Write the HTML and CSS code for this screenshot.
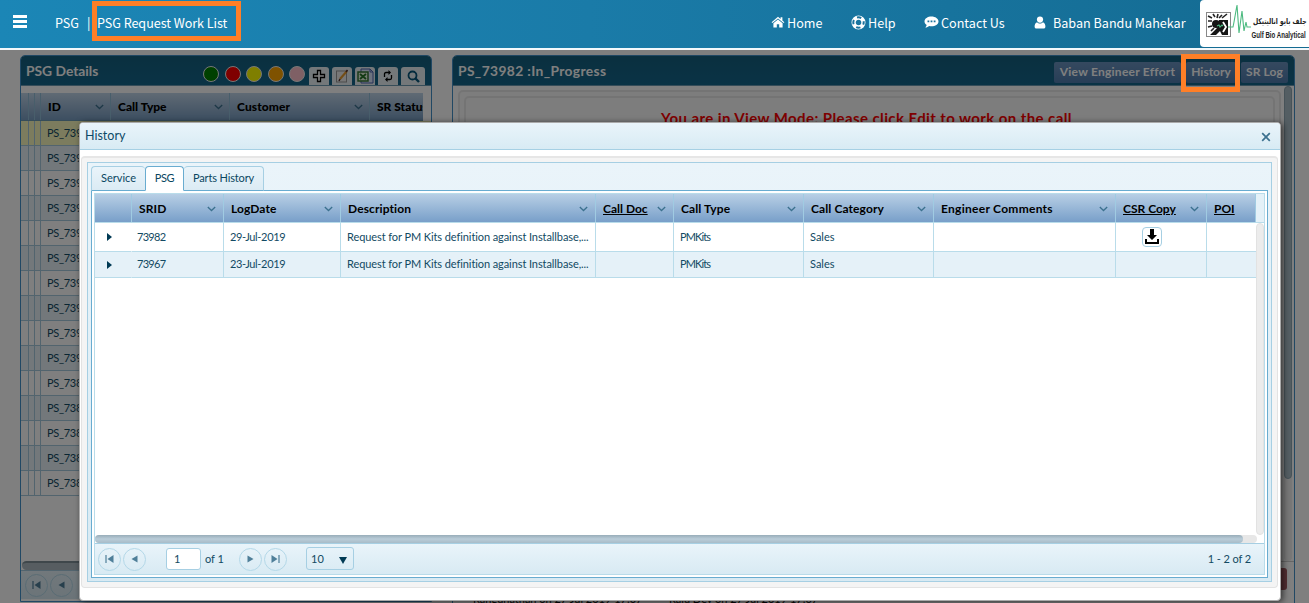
FILE: index.html
```html
<!DOCTYPE html>
<html lang="en">
<head>
<meta charset="utf-8">
<title>PSG Request Work List</title>
<link rel="stylesheet" href="styles.css">
</head>
<body>
<svg class="defs" aria-hidden="true">
  <symbol id="chev" viewBox="0 0 9 6"><path d="M.8 1 4.5 4.5 8.2 1" fill="none" stroke="#3c718f" stroke-width="1.3"/></symbol>
  <symbol id="first" viewBox="0 0 9 8"><path d="M1 0v8" stroke="#4f7f99" stroke-width="1.2"/><path d="M8.5 0v8L2.5 4z" fill="#4f7f99"/></symbol>
  <symbol id="prev" viewBox="0 0 9 8"><path d="M7.5 .5v7L1.5 4z" fill="#4f7f99"/></symbol>
</svg>
<header class="topbar">
  <span class="burger"><i></i><i></i><i></i></span>
  <span class="crumb">PSG</span><span class="bar">|</span><span class="page">PSG Request Work List</span>
  <nav class="nav">
    <a class="home"><svg width="14" height="12" viewBox="0 0 14 12"><path d="M7 .8.6 6.2l.8.9L7 2.4l5.6 4.7.8-.9-2-1.7V1.3H9.6v1.600z" fill="#fff"/><path d="M2.400 7.200 7 3.400l4.600 3.800V11.500H8.200V8.200H5.800v3.300H2.400z" fill="#fff"/></svg>Home</a>
    <a class="help"><svg width="15" height="15" viewBox="0 0 15 15"><circle cx="7.500" cy="7.500" r="4.900" fill="none" stroke="#fff" stroke-width="4.200"/><circle cx="7.500" cy="7.500" r="5.200" fill="none" stroke="#1b739d" stroke-width="2" stroke-dasharray="4.400 3.768" stroke-dashoffset="2.200"/></svg>Help</a>
    <a class="contact"><svg width="15" height="12" viewBox="0 0 15 12"><path d="M7.500.500C3.700.500.500 2.600.500 5.400c0 1.500.900 2.700 2.200 3.600-.2 1-.7 1.700-1.400 2.500 1.700-.2 2.900-.8 3.900-1.600.7.200 1.500.300 2.300.300 3.800 0 7-2.100 7-4.800S11.300.500 7.500.500z" fill="#fff"/><path d="M3.500 4.600h1.800v1.700H3.500zM6.600 4.600h1.800v1.700H6.600zM9.700 4.600h1.800v1.700H9.700z" fill="#1b739d"/></svg>Contact Us</a>
    <a class="user"><svg width="12" height="13" viewBox="0 0 12 13"><circle cx="6" cy="3.600" r="3.100" fill="#fff"/><path d="M3 6.200C1.200 6.800.600 8.700.600 10.600.600 12 1.300 12.600 2.500 12.600h7c1.200 0 1.900-.6 1.900-2 0-1.900-.6-3.800-2.400-4.400C7.500 8 4.500 8 3 6.200z" fill="#fff"/></svg>Baban Bandu Mahekar</a>
  </nav>
  <div class="logo">
    <svg width="52" height="42" viewBox="0 0 52 42">
      <rect x="6.500" y="12.500" width="24" height="24" fill="#fff" stroke="#888"/>
      <path d="M19 20h9v15h-6l-2-4-4 4h-6l7-7z" fill="#151515"/><circle cx="16" cy="24" r="4" fill="#151515"/>
      <path d="m8 16 4 2M13 14l2 3M18 14l-1 4M22 15l-3 3M27 14l-5 4M8 21h4M8 27l4-1M11 31l3-3" stroke="#222" stroke-width="1.600"/>
      <path d="m23 22 3 5-3 5" fill="none" stroke="#fff" stroke-width="1.800"/>
      <path d="M17 26l2-1 1 2 2-2 1 1M28 27h5l1-5 3-17 2 28 3-22 2 20 2-9 1 5h4" fill="none" stroke="#4dba80" stroke-width="1.100"/>
    </svg>
    <div class="logo-text"><span class="ar" dir="rtl">جلف بايو اناليتيكل</span><span class="en">Gulf Bio Analytical</span></div>
  </div>
</header>

<main class="work">
  <section class="panel list">
    <div class="panel-head">
      <h2 class="title">PSG Details</h2>
      <div class="dots"><i class="dot green"></i><i class="dot red"></i><i class="dot yellow"></i><i class="dot orange"></i><i class="dot pink"></i></div>
      <div class="tools">
        <span class="tool"><svg width="14" height="14" viewBox="0 0 14 14"><path d="M5.500 1.500h3v4h4v3h-4v4h-3v-4h-4v-3h4z" fill="#fff" stroke="#000" stroke-width="1.300"/></svg></span>
        <span class="tool"><svg width="14" height="14" viewBox="0 0 14 14"><rect x="1.500" y="2" width="10" height="11" fill="#eee" stroke="#999"/><path d="M12 2 5 10" stroke="#e59b2e" stroke-width="2"/><path d="M12.500 1 11 3M5 10l-1 2" stroke="#533" stroke-width="1.500"/></svg></span>
        <span class="tool"><svg width="17" height="16" viewBox="0 0 17 16"><path d="M4 1h9l3 3v11H4z" fill="#dce6ff" stroke="#5266b0"/><path d="M13 1v3h3" fill="none" stroke="#5266b0"/><rect x="1" y="4" width="10" height="9" fill="#e7f5de" stroke="#367735" stroke-width="1.500"/><path d="m3 6 6 5M9 6l-6 5" stroke="#267528" stroke-width="1.800"/></svg></span>
        <span class="tool"><svg width="10" height="12" viewBox="0 0 10 12"><path d="M1.500 7V4c0-1 .5-1.500 1.500-1.500h3M8.500 5v3c0 1-.5 1.500-1.500 1.500H4" fill="none" stroke="#000" stroke-width="1.300"/><path d="M5.500 0 8 2.500 5.500 5zM4.500 7 2 9.500 4.500 12z"/></svg></span>
        <span class="tool search"><svg width="13" height="13" viewBox="0 0 13 13"><circle cx="5.500" cy="5.500" r="4" fill="none" stroke="#08567a" stroke-width="1.800"/><path d="m8.500 8.500 3.500 3.500" stroke="#08567a" stroke-width="2.400"/></svg></span>
      </div>
    </div>
    <div class="list-head"><span class="c0"></span><span class="c0"></span><span class="c0"></span><b class="h-id">ID<svg class="chev"><use href="#chev"/></svg></b><b class="h-type">Call Type<svg class="chev"><use href="#chev"/></svg></b><b class="h-cust">Customer<svg class="chev"><use href="#chev"/></svg></b><b class="h-stat">SR Status</b></div>
    <div class="list-rows" id="rows">
      <div class="lr sel"><i></i><i></i><i></i><span>PS_73982</span></div>
      <div class="lr"><i></i><i></i><i></i><span>PS_73981</span></div>
      <div class="lr"><i></i><i></i><i></i><span>PS_73980</span></div>
      <div class="lr"><i></i><i></i><i></i><span>PS_73979</span></div>
      <div class="lr"><i></i><i></i><i></i><span>PS_73978</span></div>
      <div class="lr"><i></i><i></i><i></i><span>PS_73977</span></div>
      <div class="lr"><i></i><i></i><i></i><span>PS_73976</span></div>
      <div class="lr"><i></i><i></i><i></i><span>PS_73975</span></div>
      <div class="lr"><i></i><i></i><i></i><span>PS_73974</span></div>
      <div class="lr"><i></i><i></i><i></i><span>PS_73973</span></div>
      <div class="lr"><i></i><i></i><i></i><span>PS_73899</span></div>
      <div class="lr"><i></i><i></i><i></i><span>PS_73898</span></div>
      <div class="lr"><i></i><i></i><i></i><span>PS_73897</span></div>
      <div class="lr"><i></i><i></i><i></i><span>PS_73896</span></div>
      <div class="lr"><i></i><i></i><i></i><span>PS_73895</span></div>
    </div>
    <div class="list-scroll"></div>
    <div class="list-pager"><span class="round"><svg width="9" height="8"><use href="#first"/></svg></span><span class="round"><svg width="9" height="8"><use href="#prev"/></svg></span></div>
  </section>

  <section class="panel detail">
    <div class="panel-head">
      <h2 class="title ps">PS_73982 :In_Progress</h2>
      <div class="actions"><button class="btn effort">View Engineer Effort</button><button class="btn hist">History</button><button class="btn log">SR Log</button></div>
    </div>
    <div class="detail-body">
      <div class="frame"><div class="inner"><p class="warn">You are in View Mode: Please click Edit to work on the call</p></div></div>
      <div class="vtrack"><div class="vthumb"></div></div>
    </div>
    <div class="detail-foot">
      <div class="stamps"><span class="stamp s1">Rangunathan on 27 Jul 2019 17:07</span><span class="stamp s2">Raju Dev on 27 Jul 2019 17:07</span></div>
      <span class="redbtn"></span>
    </div>
  </section>
</main>
<div class="shade"></div>

<section class="modal">
  <div class="modal-head"><span class="mt">History</span><svg width="10" height="10" viewBox="0 0 10 10"><path d="m1.200 1.200 7.600 7.600M8.800 1.200 1.200 8.800" stroke="#3c718f" stroke-width="1.700"/></svg></div>
  <div class="modal-body">
    <div class="tabs">
      <div class="tablist"><span class="tab t1">Service</span><span class="tab on">PSG</span><span class="tab t3">Parts History</span></div>
      <div class="tabpane">
        <div class="grid">
          <div class="gh row"><b></b><b>SRID<svg class="chev"><use href="#chev"/></svg></b><b>LogDate<svg class="chev"><use href="#chev"/></svg></b><b>Description<svg class="chev"><use href="#chev"/></svg></b><b><u>Call Doc</u><svg class="chev"><use href="#chev"/></svg></b><b>Call Type<svg class="chev"><use href="#chev"/></svg></b><b>Call Category<svg class="chev"><use href="#chev"/></svg></b><b class="wide">Engineer Comments<svg class="chev"><use href="#chev"/></svg></b><b><u>CSR Copy</u><svg class="chev"><use href="#chev"/></svg></b><b><u>POI</u></b></div>
          <div class="gbody">
            <div class="gmain">
              <div class="row r1"><span class="arrow"><svg width="5" height="8"><path d="M0 0 5 4 0 8z" fill="#003a54"/></svg></span><span class="srid">73982</span><span class="date">29-Jul-2019</span><span class="desc">Request for PM Kits definition against Installbase,...</span><span></span><span class="pmk">PMKits</span><span>Sales</span><span></span><span class="dlcell"><i class="dl"><svg width="14" height="15" viewBox="0 0 14 15"><path d="M5 0h4v6h3l-5 5-5-5h3z"/><path d="M1 10v4h12v-4" fill="none" stroke="#000" stroke-width="2"/></svg></i></span><span></span></div>
              <div class="row r2"><span class="arrow"><svg width="5" height="8"><path d="M0 0 5 4 0 8z" fill="#003a54"/></svg></span><span class="srid">73967</span><span class="date">23-Jul-2019</span><span class="desc">Request for PM Kits definition against Installbase,...</span><span></span><span class="pmk">PMKits</span><span>Sales</span><span></span><span></span><span></span></div>
            </div>
            <div class="gv"></div>
          </div>
          <div class="gs"><div class="gthumb"></div></div>
          <div class="pager">
            <span class="round"><svg width="9" height="8"><use href="#first"/></svg></span><span class="round"><svg width="9" height="8"><use href="#prev"/></svg></span>
            <span class="num">1</span><span class="of">of 1</span>
            <span class="round flip"><svg width="9" height="8"><use href="#prev"/></svg></span><span class="round flip"><svg width="9" height="8"><use href="#first"/></svg></span>
            <span class="size">10<svg width="8" height="7"><path d="M0 0h8L4 7z" fill="#003a54"/></svg></span>
            <span class="count">1 - 2 of 2</span>
          </div>
        </div>
      </div>
    </div>
  </div>
</section>
<div class="mark mark-title"></div>
<div class="mark mark-history"></div>
</body>
</html>
```
FILE: styles.css
```css
*{box-sizing:border-box}
body{margin:0;width:1309px;height:603px;overflow:hidden;position:relative;background:#fff;font:11px Lato,"Open Sans",sans-serif;color:#124a63}
svg{display:block;flex:none}
.defs{position:absolute;width:0;height:0}

/* top bar */
.topbar{height:50px;border-bottom:2px solid #f3f8fb;background:linear-gradient(90deg,#1b86b6,#1a7ba8 45%,#146b92);display:flex;align-items:center;color:#fff;font:12.600px "Noto Sans CJK SC","Noto Sans CJK JP",sans-serif;white-space:nowrap;padding-left:13px}
.topbar>*{flex:none}
.burger{width:14px;display:grid;gap:2px;margin:-5px 28px 0 0}
.burger i{height:3px;background:#fff}
.crumb{width:32px}
.bar{width:10px}
.page{width:130px;letter-spacing:-.05px}
.topbar>span:not(.burger){padding-bottom:3px}
.nav{width:973px;height:100%;display:flex;align-items:center;padding:0 0 4px 544px}
.nav a{display:flex;align-items:center;flex:none}
.nav svg{margin-right:2px}
.home{width:80px}
.help{width:73px}
.contact{width:110px}
.nav .user svg{margin-right:7px}
.logo{width:109px;height:47px;background:#fff;border-radius:4px 0 0 4px;display:flex;align-self:flex-start}
.logo-text{width:54px;display:flex;flex-direction:column;align-items:flex-end;padding:15px 0 0;color:#222}
.logo-text span{transform-origin:right}
.logo-text .ar{font:bold 8px/13px "DejaVu Sans",sans-serif;transform:scaleX(.75)}
.logo-text .en{font:bold 9px/15px "Liberation Sans",sans-serif;transform:scaleX(.68)}

/* work area */
.work{display:grid;grid-template-columns:412px 843px;column-gap:20px;padding:5px 0 0 20px;height:553px}
.panel{border:1px solid #4390c8;border-radius:5px 5px 0 0;background:#fff;overflow:hidden;min-width:0}
.panel-head{height:30px;background:linear-gradient(#14607f,#14668c);display:flex;border-bottom:1px solid #6c9bb2;flex:none}
.title{margin:0;color:#fff;font:bold 13.800px/30px Lato,sans-serif;padding-left:5px;width:183px;white-space:nowrap}
.ps{width:596px;letter-spacing:.37px}
.dots{display:flex;gap:5.500px;padding-top:10px;margin-left:-1px;width:106px}
.dot{width:16px;height:16px;border-radius:50%;border:1px solid #eee;flex:none}
.green{background:#008000}.red{background:#f00}.yellow{background:#ff0}.orange{background:#ffa500}.pink{background:#ffc0cb}
.tools{display:flex;gap:3px;padding-top:11px}
.tool{width:20px;height:18px;background:#e8f1f5;border-radius:3px 3px 0 0;display:grid;place-items:center}
.search{width:24px}
.list{display:flex;flex-direction:column;height:547px}
.list-head{margin:7px 8px 0 0;height:28px;display:flex;background:linear-gradient(#c0d5e9,#799dc2);border-bottom:1px solid #6c9bb2;color:#000;overflow:hidden;font:bold 12px/28px Lato,sans-serif;white-space:nowrap;flex:none}
.c0{width:6px;border-right:1px solid #91bdd7;flex:none}
.c0:first-child{width:8px}
.list-head b{flex:none;padding-left:7px;border-right:1px solid #91bdd7;display:flex;align-items:center;justify-content:space-between;padding-right:6px}
.chev{width:9px;height:6px}
.h-id{width:70px}.h-type{width:119px}.h-cust{width:140px;letter-spacing:.1px}.h-stat{width:80px}
.lr{height:25px;display:flex;border-bottom:1px solid #a4c9dd;line-height:24px;background:#fff;letter-spacing:-.3px}
.lr:nth-child(even){background:#e6f0f6}
.lr.sel{background:#f9f9bd}
.lr i{width:6px;border-right:1px solid #a4c9dd}
.lr i:first-child{width:8px}
.lr span{padding-left:6px}
.list-rows{height:440px;flex:none}
.list-scroll{height:9px;border-radius:5px;background:#aebbc2;margin:0 8px 0 1px;flex:none;border-top:2px solid #7e8f97}
.list-pager{flex:none;height:29px;background:linear-gradient(#e4f1f8,#d6e8f1);display:flex;gap:2px;align-items:center;padding-left:4px;border-top:1px solid #a4c9dd}
.round{width:23px;height:23px;border:1px solid #b4d8e8;border-radius:50%;display:grid;place-items:center;flex:none}
.actions{display:flex;gap:5px;padding-top:6px;width:240px}
.btn{border:0;border-radius:2px;background:linear-gradient(#6b93bf,#4f7cae);color:#fff;font:bold 12px/20px Lato,sans-serif;padding:0 0 1px;height:21px;white-space:nowrap}
.effort{width:127px;margin-left:5px;letter-spacing:.25px}
.hist{width:50px}.log{width:47px;letter-spacing:.1px}
.detail{height:560px;display:flex;flex-direction:column}
.detail-body{height:475px;display:flex;padding:4px 2px 0 5px;justify-content:space-between;flex:none}
.frame{width:823px;height:471px;border:2px solid #e9e9e9;border-radius:5px;padding:4px 4px 4px 4px;background:#fafafa}
.inner{border:2px solid #e9e9e9;border-radius:5px;height:450px;text-align:center}
.warn{margin:10px 6px 0 0;color:#f00;font:bold 15px/20px Lato,sans-serif;letter-spacing:.4px;white-space:nowrap}
.vtrack{width:8px;height:475px;margin-top:-4px;background:#eee;border-radius:4px}
.vthumb{height:393px;background:#a9bdc6;border:1px solid #8ea6b2;border-radius:4px}
.detail-foot{display:flex;justify-content:space-between;padding:6px 7px 0 20px;border-top:1px solid #ccc}
.stamps{display:flex;padding-top:24px;color:#111;gap:18px}
.stamp{width:178px;white-space:nowrap}
.redbtn{width:50px;height:22px;background:#a65c64;border-radius:3px}
.shade{position:absolute;inset:50px 0 0;background:rgba(0,0,0,.5)}

/* history dialog */
.modal{position:absolute;left:79px;top:122px;width:1202px;height:479px;border:1px solid #aaa;border-radius:4px;background:#fff;box-shadow:2px 1px 6px rgba(0,0,0,.6);overflow:hidden}
.modal-head{height:27px;background:linear-gradient(#e9f4fa,#d8ebf4);border-bottom:1px solid #a6d0e4;display:flex;justify-content:space-between;align-items:center;padding:2px 9px 0 5px;color:#0d4a66}
.mt{font-size:12.500px;margin-top:-4px}
.modal-body{margin:6px 2px 0 1px;height:432px;background:#f4f4f4;border:1px solid #e3e3e3;border-top:2px solid #e6e6e6;border-radius:4px;padding:4px 5px}
.tabs{height:420px;border:1px solid #a6cfe3;background:linear-gradient(#eaf4fa,#d8eaf3);padding:3px;display:flex;flex-direction:column}
.tablist{height:25px;display:flex;color:#0a4661;font-size:11px;line-height:22px;flex:none;margin-bottom:-1px;z-index:1}
.tab{border:1px solid #a6cfe3;border-bottom:1px solid #69acd0;border-radius:4px 4px 0 0;text-align:center;background:linear-gradient(#eaf4fa,#dbebf4);white-space:nowrap}
.t1{width:54px;border-right:0}
.on{width:39px;background:#fff;border-color:#69acd0;border-bottom-color:#fff;letter-spacing:-.4px}
.t3{width:80px;border-left:0;letter-spacing:-.15px}
.tabpane{flex:1;border:1px solid #69acd0;background:#fff;padding:2px;min-height:0}
.grid{border:1px solid #b9dcea;height:100%;display:flex;flex-direction:column}
.row{display:grid;grid-template-columns:37px 92px 117px 255px 78px 130px 130px 182px 91px 49px}
.gh{height:29px;background:linear-gradient(90deg,transparent 1161px,#e4f1f8 1161px),linear-gradient(#b8cfe5,#789fc9);border-bottom:1px solid #b9dcea;color:#000;font-size:12px;letter-spacing:.1px;flex:none}
.gh b{border-right:1px solid #a0cbe2;padding:1px 7px 0;display:flex;align-items:center;justify-content:space-between;white-space:nowrap}
.gh .wide{letter-spacing:.27px}
.gh u{text-underline-offset:1px;letter-spacing:0}
.gbody{flex:1;display:flex;justify-content:space-between}
.gmain{width:1161px}
.gmain .row>span{border-right:1px solid #b9dcea;border-bottom:1px solid #b9dcea;padding:0 0 2px 6px;display:flex;align-items:center;white-space:nowrap}
.gmain .row>span:last-child{border-right:0}
.gmain .row>.arrow{padding:0 0 0 12px;border-right-color:transparent}
.gmain .row>.srid{padding-left:5px;letter-spacing:-.7px}
.date{letter-spacing:-.35px}
.desc{letter-spacing:-.09px}
.pmk{letter-spacing:-.9px}
.r1{height:29px}.r2{height:26px;background:#e5f1f8}
.gmain .row>.dlcell{padding:0 0 1px 26px}
.dl{width:20px;height:20px;border:1px solid #a6cfe3;border-radius:4px;display:grid;place-items:center}
.gv{width:8px;border-radius:4px;background:#ececec;border:1px solid #e2e2e2}
.gs{height:8px;width:1162px;border-radius:4px;background:#e7e7e7;flex:none}
.gthumb{width:1148px;height:8px;border-radius:4px;background:linear-gradient(#98adb9,#b9ccd8 50%,#a8bcc8)}
.pager{height:31px;flex:none;border-top:1px solid #a6cfe3;background:linear-gradient(#e9f4fa,#d8eaf3);display:flex;align-items:center;padding-left:3px}
.round+.round{margin-left:2px}
.list-pager .round+.round{margin-left:0}
.flip svg{transform:scaleX(-1)}
.num{width:35px;height:22px;background:#fff;border:1px solid #a6cfe3;border-radius:3px;margin-left:20px;padding-left:7px;line-height:20px}
.of{width:38px;padding:0 0 1px 4px}
.size{width:48px;height:23px;border:1px solid #a6cfe3;border-radius:3px;margin-left:19px;display:flex;align-items:center;justify-content:space-between;padding:0 6px 1px 4px;margin-bottom:1px}
.size svg{margin-top:4px}
.count{margin-left:auto;padding:0 13px 1px 0;letter-spacing:-.1px}

/* callout frames */
.mark{position:absolute;border:5px solid #ff7f27}
.mark-title{left:92px;top:1px;width:149px;height:40px}
.mark-history{left:1181px;top:54px;width:59px;height:38px}
```
